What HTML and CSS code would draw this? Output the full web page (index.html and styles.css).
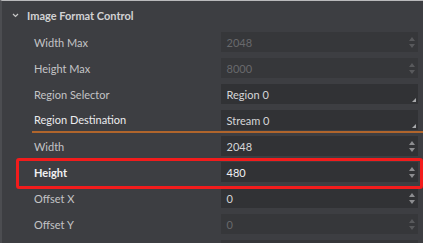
FILE: index.html
```html
<!DOCTYPE html>
<html>
<head>
<meta charset="utf-8">
<link rel="stylesheet" href="styles.css">
</head>
<body>
<div class="panel">
  <div class="header">
    <svg class="chev" width="7" height="5" viewBox="0 0 7 5"><path d="M1 1 L3.5 3.5 L6 1" fill="none" stroke="#c8c8c8" stroke-width="1.2"/></svg>
    <span>Image Format Control</span>
  </div>
  <div class="rows">
    <div class="row">
      <div class="label">Width Max</div>
      <div class="field disabled"><span>2048</span><span class="spin"><i class="up"></i><i class="down"></i></span></div>
    </div>
    <div class="row">
      <div class="label">Height Max</div>
      <div class="field disabled"><span>8000</span><span class="spin"><i class="up"></i><i class="down"></i></span></div>
    </div>
    <div class="row">
      <div class="label">Region Selector</div>
      <div class="field combo"><span>Region 0</span><i class="grip"></i></div>
    </div>
    <div class="row current">
      <div class="label">Region Destination</div>
      <div class="field combo"><span>Stream 0</span><i class="grip"></i></div>
    </div>
    <div class="row">
      <div class="label">Width</div>
      <div class="field"><span>2048</span><span class="spin"><i class="up"></i><i class="down"></i></span></div>
    </div>
    <div class="row highlight">
      <div class="label">Height</div>
      <div class="field"><span>480</span><span class="spin"><i class="up"></i><i class="down"></i></span></div>
    </div>
    <div class="row">
      <div class="label">Offset X</div>
      <div class="field"><span>0</span><span class="spin"><i class="up"></i><i class="down"></i></span></div>
    </div>
    <div class="row">
      <div class="label">Offset Y</div>
      <div class="field disabled"><span>0</span><span class="spin"><i class="up"></i><i class="down"></i></span></div>
    </div>
    <div class="row">
      <div class="label"></div>
      <div class="field disabled"><span></span></div>
    </div>
  </div>
  <div class="redbox"></div>
</div>
</body>
</html>
```
FILE: styles.css
```css
html, body {
  margin: 0;
  padding: 0;
  background: #3d3e42;
  overflow: hidden;
}
.panel {
  position: relative;
  width: 423px;
  height: 243px;
  box-sizing: border-box;
  border-top: 1px solid #b9b9bb;
  border-left: 2px solid #4c4d51;
  background: #3d3e42;
  font-family: Lato, "Noto Sans", sans-serif;
  font-size: 11px;
  color: #c4c4c6;
  overflow: hidden;
}
.header {
  height: 28px;
  display: flex;
  align-items: center;
  padding-left: 10px;
  gap: 8px;
  font-weight: 700;
  color: #d2d2d4;
}
.chev {
  display: block;
}
.rows {
  display: flex;
  flex-direction: column;
}
.row {
  height: 26px;
  display: flex;
  align-items: center;
  margin-left: 30px;
  padding-right: 5px;
  box-sizing: border-box;
}
.row.current {
  border-bottom: 2px solid #b0652c;
}
.row.current .label {
  color: #ececee;
}
.row.current .field {
  margin-top: 2px;
}
.row.highlight .label {
  color: #f0f0f2;
  font-weight: 700;
}
.row.highlight .field {
  color: #f0f0f2;
}
.label {
  width: 187px;
  padding-left: 2px;
}
.field {
  position: relative;
  width: 198px;
  height: 20px;
  background: #313235;
  display: flex;
  align-items: center;
  justify-content: space-between;
  padding-left: 6px;
  box-sizing: border-box;
  color: #d6d6d8;
}
.field.disabled {
  color: #68696c;
  background: #36373a;
}
.spin {
  display: flex;
  flex-direction: column;
  gap: 3px;
  margin-right: 3px;
}
.spin i {
  display: block;
  width: 0;
  height: 0;
  border-left: 3px solid transparent;
  border-right: 3px solid transparent;
}
.spin .up {
  border-bottom: 4px solid #8c8d90;
}
.spin .down {
  border-top: 4px solid #8c8d90;
}
.disabled .spin .up {
  border-bottom-color: #58595c;
}
.disabled .spin .down {
  border-top-color: #58595c;
}
.grip {
  position: absolute;
  right: 2px;
  bottom: 2px;
  width: 0;
  height: 0;
  border-left: 4px solid transparent;
  border-bottom: 4px solid #a8a9ac;
}
.redbox {
  position: absolute;
  left: 14px;
  top: 157px;
  width: 407px;
  height: 31px;
  box-sizing: border-box;
  border: 3px solid #f21c1c;
  border-radius: 3px;
}
```
